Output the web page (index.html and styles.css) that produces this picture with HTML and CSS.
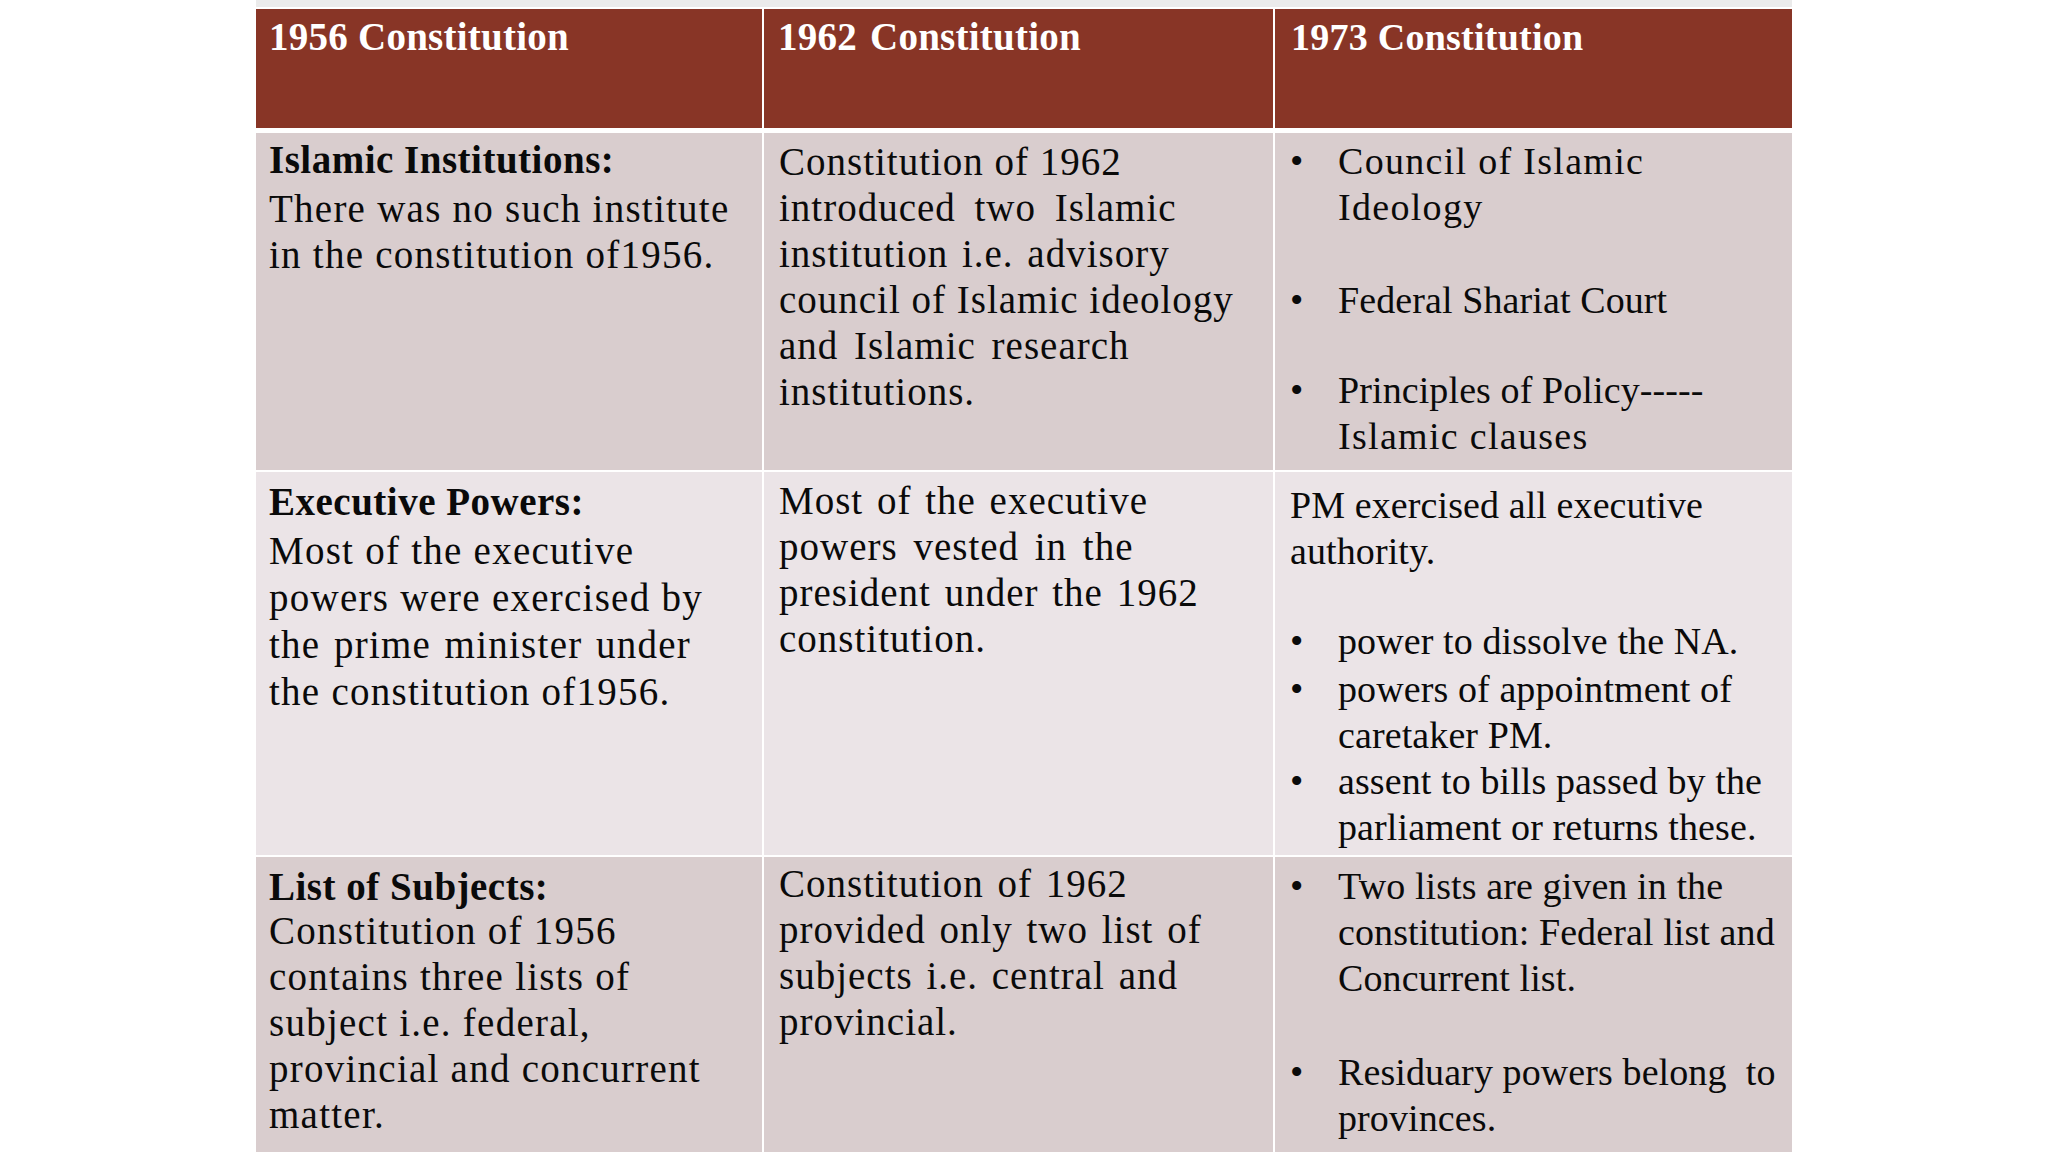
FILE: index.html
```html
<!DOCTYPE html>
<html lang="en">
<head>
<meta charset="utf-8">
<title>Comparison of Constitutions</title>
<link rel="stylesheet" href="styles.css">
</head>
<body>
<div class="page">
  <div class="top-strip"></div>

  <div class="row head">
    <div class="cell c1"><span class="ln">1956 Constitution</span></div>
    <div class="cell c2"><span class="ln">1962 Constitution</span></div>
    <div class="cell c3"><span class="ln">1973 Constitution</span></div>
  </div>

  <div class="row r1 dark">
    <div class="cell c1 pt-a">
      <span class="ln hd hd-gap">Islamic Institutions:</span>
      <span class="ln">There was no such institute</span>
      <span class="ln">in the constitution of1956.</span>
    </div>
    <div class="cell c2 pt-b">
      <span class="ln tight-ws">Constitution of 1962</span>
      <span class="ln wide-ws">introduced two Islamic</span>
      <span class="ln">institution i.e. advisory</span>
      <span class="ln tight-ws">council of Islamic ideology</span>
      <span class="ln mid-ws">and Islamic research</span>
      <span class="ln">institutions.</span>
    </div>
    <div class="cell c3 pt-c1">
      <div class="item">
        <span class="bul">•</span>
        <div class="txt">
          <span class="ln wide">Council of Islamic</span>
          <span class="ln wide">Ideology</span>
        </div>
      </div>
      <div class="item gap-47">
        <span class="bul">•</span>
        <div class="txt"><span class="ln">Federal Shariat Court</span></div>
      </div>
      <div class="item gap-44">
        <span class="bul">•</span>
        <div class="txt">
          <span class="ln">Principles of Policy-----</span>
          <span class="ln wide">Islamic clauses</span>
        </div>
      </div>
    </div>
  </div>

  <div class="row r2 light">
    <div class="cell c1 pt-r2 loose">
      <span class="ln hd hd-gap-s">Executive Powers:</span>
      <span class="ln">Most of the executive</span>
      <span class="ln">powers were exercised by</span>
      <span class="ln small-ws">the prime minister under</span>
      <span class="ln">the constitution of1956.</span>
    </div>
    <div class="cell c2 pt-b">
      <span class="ln">Most of the executive</span>
      <span class="ln mid-ws">powers vested in the</span>
      <span class="ln">president under the 1962</span>
      <span class="ln">constitution.</span>
    </div>
    <div class="cell c3 pt-c2">
      <span class="ln">PM exercised all executive</span>
      <span class="ln">authority.</span>
      <div class="item gap-44">
        <span class="bul">•</span>
        <div class="txt"><span class="ln">power to dissolve the NA.</span></div>
      </div>
      <div class="item gap-2">
        <span class="bul">•</span>
        <div class="txt">
          <span class="ln">powers of appointment of</span>
          <span class="ln">caretaker PM.</span>
        </div>
      </div>
      <div class="item">
        <span class="bul">•</span>
        <div class="txt">
          <span class="ln">assent to bills passed by the</span>
          <span class="ln">parliament or returns these.</span>
        </div>
      </div>
    </div>
  </div>

  <div class="row r3 dark">
    <div class="cell c1 pt-r3">
      <span class="ln hd hd-tight">List of Subjects:</span>
      <span class="ln">Constitution of 1956</span>
      <span class="ln">contains three lists of</span>
      <span class="ln">subject i.e. federal,</span>
      <span class="ln">provincial and concurrent</span>
      <span class="ln">matter.</span>
    </div>
    <div class="cell c2 pt-a">
      <span class="ln">Constitution of 1962</span>
      <span class="ln">provided only two list of</span>
      <span class="ln">subjects i.e. central and</span>
      <span class="ln">provincial.</span>
    </div>
    <div class="cell c3 pt-c3">
      <div class="item">
        <span class="bul">•</span>
        <div class="txt">
          <span class="ln">Two lists are given in the</span>
          <span class="ln">constitution: Federal list and</span>
          <span class="ln">Concurrent list.</span>
        </div>
      </div>
      <div class="item gap-48">
        <span class="bul">•</span>
        <div class="txt">
          <span class="ln">Residuary powers belong&nbsp; to</span>
          <span class="ln">provinces.</span>
        </div>
      </div>
    </div>
  </div>
</div>
</body>
</html>
```

FILE: styles.css
```css
html, body {
  margin: 0;
  padding: 0;
  background: #ffffff;
  height: 1152px;
  overflow: hidden;
}

body {
  font-family: "Liberation Serif", "Times New Roman", serif;
  color: #0a0a0a;
}

.page {
  margin-left: 256px;
  width: 1536px;
  display: flex;
  flex-direction: column;
}

.top-strip {
  height: 7px;
  background: #ebebeb;
  margin-bottom: 2px;
}

.row {
  display: grid;
  grid-template-columns: 506px 509px 517px;
  column-gap: 2px;
}

.cell {
  box-sizing: border-box;
  font-size: 39px;
  line-height: 46px;
  overflow: hidden;
}

.ln {
  display: block;
  white-space: nowrap;
}

/* header */
.head {
  height: 119px;
  margin-bottom: 5px;
}
.head .cell {
  background: #883526;
  color: #ffffff;
  font-weight: bold;
  letter-spacing: 0.25px;
  padding-top: 4.5px;
}
.head .c1 { padding-left: 13px; }
.head .c2 { padding-left: 14px; }
.head .c3 { padding-left: 16px; }

.r1 { height: 337px; margin-bottom: 2px; }
.r2 { height: 383px; margin-bottom: 2px; }
.r3 { height: 320px; }

.dark .cell { background: #d9cdce; }
.light .cell { background: #ebe4e7; }

/* columns */
.c1 {
  padding-left: 13px;
  letter-spacing: 1.25px;
}
.c2 {
  padding-left: 15px;
  letter-spacing: 1px;
  word-spacing: 3px;
}
.c3 {
  padding-left: 15px;
  font-size: 38px;
  letter-spacing: 0.1px;
}

.loose { line-height: 47px; }

.hd {
  font-weight: bold;
  letter-spacing: 0.5px;
}
.hd-gap { margin-bottom: 3.4px; }
.hd-gap-s { margin-bottom: 2px; }
.hd-tight { margin-bottom: -2px; }

.wide-ws { word-spacing: 8px; }
.mid-ws { word-spacing: 5px; }
.small-ws { word-spacing: 2.5px; }
.tight-ws { word-spacing: 0; }

.wide { letter-spacing: 1.3px; }

/* vertical offsets */
.pt-a { padding-top: 4px; }
.pt-b { padding-top: 5.8px; }
.pt-r2 { padding-top: 6px; }
.pt-r3 { padding-top: 7.2px; }
.pt-c1 { padding-top: 4.5px; }
.pt-c2 { padding-top: 9.9px; }
.pt-c3 { padding-top: 6.2px; }

/* bullets */
.item {
  display: flex;
  align-items: flex-start;
}
.bul {
  flex: 0 0 48px;
  width: 48px;
  letter-spacing: 0;
}
.txt {
  display: flex;
  flex-direction: column;
}

.gap-2 { margin-top: 2px; }
.gap-44 { margin-top: 44.5px; }
.gap-47 { margin-top: 47px; }
.gap-48 { margin-top: 48px; }
```
